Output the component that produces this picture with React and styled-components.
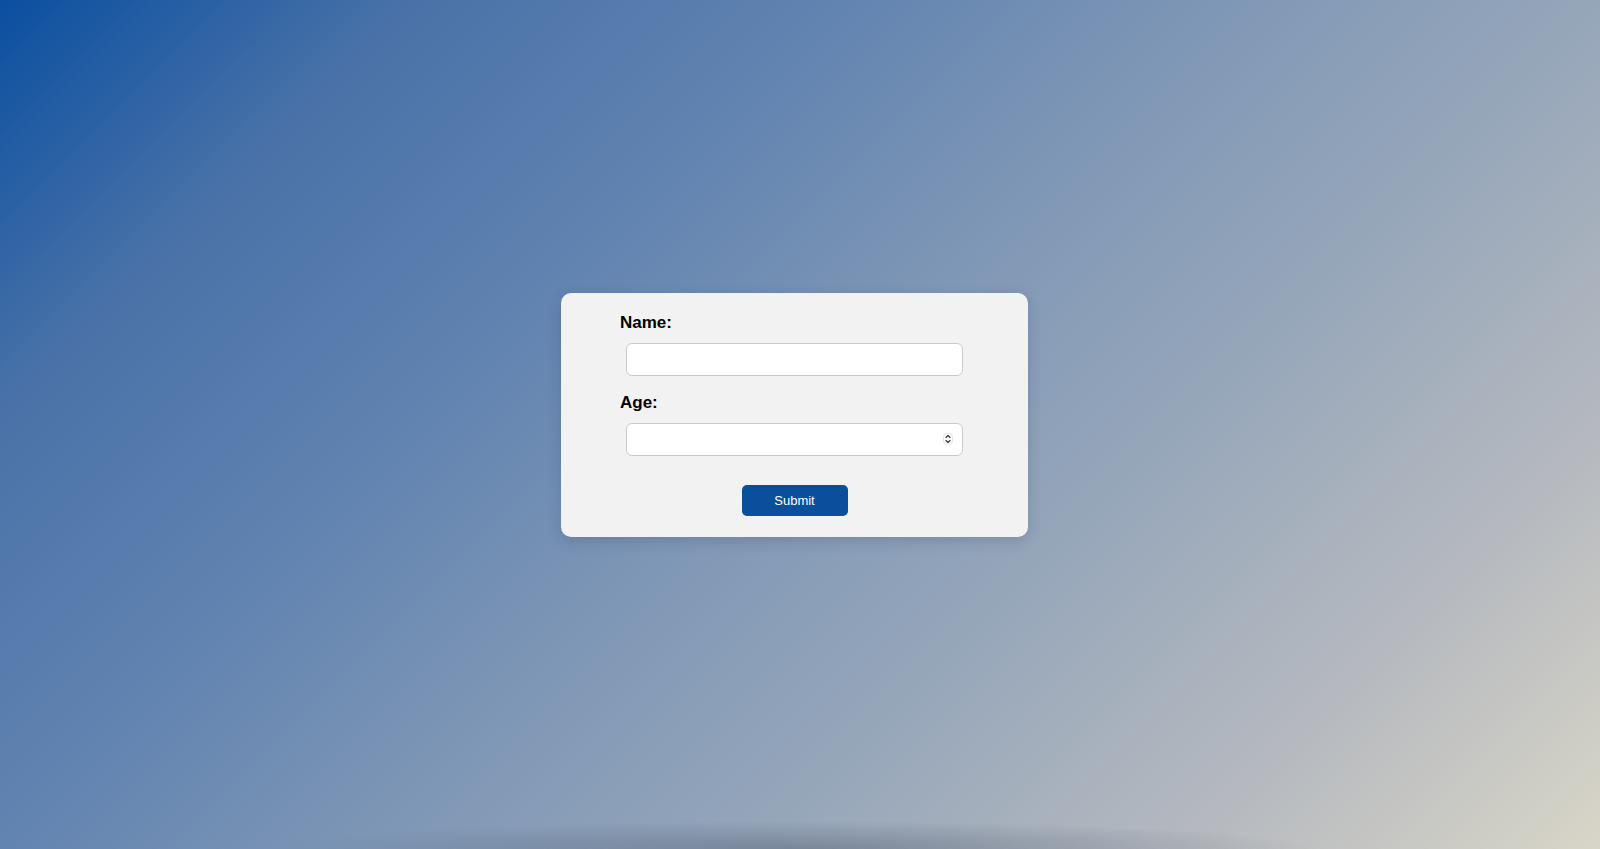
import React from "react";
import styled, { createGlobalStyle } from "styled-components";

const GlobalStyle = createGlobalStyle`
  html, body {
    margin: 0;
    height: 100%;
  }
  body {
    font-family: "Liberation Sans", Arial, sans-serif;
  }
  * {
    box-sizing: border-box;
  }
`;

const Page = styled.div`
  min-height: 100vh;
  display: flex;
  align-items: center;
  justify-content: center;
  padding: 0 11px 20px 0;
  background:
    radial-gradient(ellipse 520px 28px at 50% 100%, rgba(70, 80, 100, 0.38), rgba(70, 80, 100, 0) 100%),
    linear-gradient(
      135deg,
      #0a4fa0 0%,
      #4a72a8 17%,
      #5f82b0 33%,
      #7f97b6 50%,
      #97a7ba 66%,
      #b5b9bf 83%,
      #d9d6c8 100%
    );
`;

const Card = styled.form`
  width: 467px;
  padding: 19px 60px 21px;
  background: #f2f2f2;
  border-radius: 10px;
  box-shadow: 0 4px 14px rgba(20, 40, 80, 0.18);
  display: flex;
  flex-direction: column;
`;

const Label = styled.label`
  display: block;
  font-size: 17px;
  line-height: 22px;
  font-weight: bold;
  color: #000;
  margin-left: -1px;
  margin-top: ${(p) => (p.first ? "0" : "16px")};
`;

const Field = styled.div`
  position: relative;
  margin: 9px 5px 0;
`;

const Input = styled.input`
  display: block;
  width: 100%;
  height: 33px;
  padding: 0 10px;
  border: 1px solid #c9c9c9;
  border-radius: 6px;
  background: #fff;
  font-family: inherit;
  font-size: 14px;
  outline: none;
  -moz-appearance: textfield;

  &::-webkit-outer-spin-button,
  &::-webkit-inner-spin-button {
    -webkit-appearance: none;
    margin: 0;
  }
`;

const Stepper = styled.svg`
  position: absolute;
  right: 10px;
  top: 50%;
  transform: translateY(-50%);
  pointer-events: none;
`;

const Button = styled.button`
  display: block;
  width: 106px;
  height: 31px;
  margin: 29px auto 0;
  border: none;
  border-radius: 5px;
  background: #0a4f9c;
  color: #fff;
  font-family: "Liberation Sans", Arial, sans-serif;
  font-size: 13px;
  cursor: pointer;
`;

export default function App() {
  return (
    <>
      <GlobalStyle />
      <Page>
        <Card onSubmit={(e) => e.preventDefault()}>
          <Label first htmlFor="name">Name:</Label>
          <Field>
            <Input id="name" type="text" />
          </Field>

          <Label htmlFor="age">Age:</Label>
          <Field>
            <Input id="age" type="number" />
            <Stepper width="10" height="13" viewBox="0 0 10 13">
              <rect x="0.5" y="0.5" width="9" height="12" rx="4.5" fill="#fafafa" stroke="#e4e4e4" />
              <path d="M3 5 L5 3 L7 5" fill="none" stroke="#333" strokeWidth="1.1" strokeLinecap="round" strokeLinejoin="round" />
              <path d="M3 8 L5 10 L7 8" fill="none" stroke="#333" strokeWidth="1.1" strokeLinecap="round" strokeLinejoin="round" />
            </Stepper>
          </Field>

          <Button type="submit">Submit</Button>
        </Card>
      </Page>
    </>
  );
}
